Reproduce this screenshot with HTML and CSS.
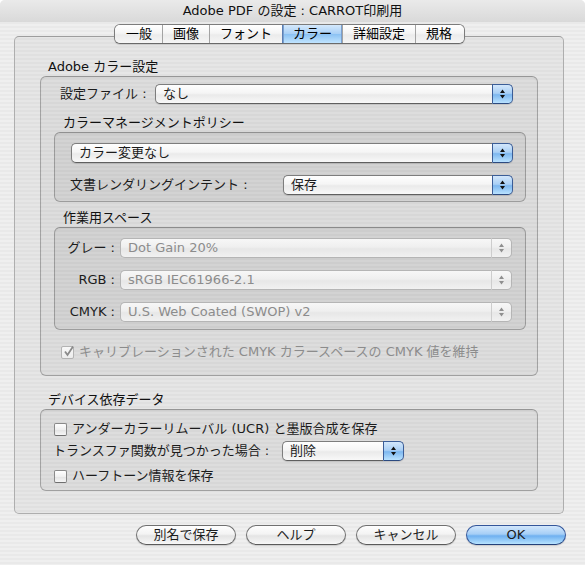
FILE: index.html
```html
<!DOCTYPE html>
<html lang="ja">
<head>
<meta charset="utf-8">
<title>Adobe PDF の設定</title>
<link rel="stylesheet" href="styles.css">
</head>
<body>
<div class="window">
  <div class="titlebar">Adobe PDF の設定 : CARROT印刷用</div>
  <div class="tabview">
    <div class="tabbar">
      <div class="tabs">
        <span class="tab">一般</span>
        <span class="tab">画像</span>
        <span class="tab">フォント</span>
        <span class="tab tab-selected">カラー</span>
        <span class="tab">詳細設定</span>
        <span class="tab tab-last">規格</span>
      </div>
    </div>
    <div class="pane">
      <div class="group-label">Adobe カラー設定</div>
      <div class="box box-adobe">
        <div class="row row-file">
          <span class="label label-file">設定ファイル :</span>
          <div class="popup">
            <span class="popup-value">なし</span>
            <span class="popup-arrows"><svg width="7" height="12" viewBox="0 0 7 12"><path d="M3.5 1.5L6 5H1z M1 7h5l-2.5 3.5z"/></svg></span>
          </div>
        </div>

        <div class="group-label sub-label">カラーマネージメントポリシー</div>
        <div class="box box-inner box-policy">
          <div class="popup">
            <span class="popup-value">カラー変更なし</span>
            <span class="popup-arrows"><svg width="7" height="12" viewBox="0 0 7 12"><path d="M3.5 1.5L6 5H1z M1 7h5l-2.5 3.5z"/></svg></span>
          </div>
          <div class="row row-intent">
            <span class="label label-intent">文書レンダリングインテント :</span>
            <div class="popup">
              <span class="popup-value">保存</span>
              <span class="popup-arrows"><svg width="7" height="12" viewBox="0 0 7 12"><path d="M3.5 1.5L6 5H1z M1 7h5l-2.5 3.5z"/></svg></span>
            </div>
          </div>
        </div>

        <div class="group-label sub-label sub-label-working">作業用スペース</div>
        <div class="box box-inner box-working">
          <div class="row row-space">
            <span class="label label-space">グレー :</span>
            <div class="popup popup-disabled">
              <span class="popup-value">Dot Gain 20%</span>
              <span class="popup-arrows"><svg width="7" height="12" viewBox="0 0 7 12"><path d="M3.5 1.5L6 5H1z M1 7h5l-2.5 3.5z"/></svg></span>
            </div>
          </div>
          <div class="row row-space">
            <span class="label label-space">RGB :</span>
            <div class="popup popup-disabled">
              <span class="popup-value">sRGB IEC61966-2.1</span>
              <span class="popup-arrows"><svg width="7" height="12" viewBox="0 0 7 12"><path d="M3.5 1.5L6 5H1z M1 7h5l-2.5 3.5z"/></svg></span>
            </div>
          </div>
          <div class="row row-space">
            <span class="label label-space">CMYK :</span>
            <div class="popup popup-disabled">
              <span class="popup-value">U.S. Web Coated (SWOP) v2</span>
              <span class="popup-arrows"><svg width="7" height="12" viewBox="0 0 7 12"><path d="M3.5 1.5L6 5H1z M1 7h5l-2.5 3.5z"/></svg></span>
            </div>
          </div>
        </div>

        <div class="check-row check-calib disabled">
          <span class="cb cb-disabled"><svg width="11" height="11" viewBox="0 0 11 11"><path d="M2 5.5L4.5 9L10 0.5" fill="none" stroke="#8a8a8a" stroke-width="1.8"/></svg></span>
          <span class="check-text">キャリブレーションされた CMYK カラースペースの CMYK 値を維持</span>
        </div>
      </div>

      <div class="group-label device-label">デバイス依存データ</div>
      <div class="box box-device">
        <div class="check-row">
          <span class="cb"></span>
          <span class="check-text">アンダーカラーリムーバル (UCR) と墨版合成を保存</span>
        </div>
        <div class="row row-transfer">
          <span class="label label-transfer">トランスファ関数が見つかった場合 :</span>
          <div class="popup popup-small">
            <span class="popup-value">削除</span>
            <span class="popup-arrows"><svg width="7" height="12" viewBox="0 0 7 12"><path d="M3.5 1.5L6 5H1z M1 7h5l-2.5 3.5z"/></svg></span>
          </div>
        </div>
        <div class="check-row check-halftone">
          <span class="cb"></span>
          <span class="check-text">ハーフトーン情報を保存</span>
        </div>
      </div>
    </div>
  </div>
  <div class="buttons">
    <span class="btn">別名で保存</span>
    <span class="btn">ヘルプ</span>
    <span class="btn">キャンセル</span>
    <span class="btn btn-default">OK</span>
  </div>
</div>
</body>
</html>
```

FILE: styles.css
```css
html, body {
  margin: 0;
  padding: 0;
  background: #ffffff;
}

body {
  font-family: "DejaVu Sans", "Noto Sans CJK JP", sans-serif;
  font-size: 13px;
  line-height: 16px;
  color: #1c1c1c;
}

.window {
  width: 585px;
  height: 565px;
  overflow: hidden;
  border-radius: 5px 5px 0 0;
  background: repeating-linear-gradient(to bottom, #efefef 0px, #efefef 2px, #e9e9e9 2px, #e9e9e9 4px);
}

.titlebar {
  height: 22px;
  line-height: 22px;
  text-align: center;
  background: linear-gradient(#eaeaea, #d9d9d9);
  color: #111;
}

.tabview {
  padding: 2px 21px 0 14px;
}

.tabbar {
  display: flex;
  justify-content: center;
  position: relative;
  z-index: 1;
  padding-left: 1px;
}

.tabs {
  display: flex;
  height: 20px;
  box-sizing: border-box;
  border: 1px solid #7c7c7c;
  border-bottom-color: #6a6a6a;
  border-radius: 6px;
  overflow: hidden;
  box-shadow: 0 1px 1px rgba(0, 0, 0, 0.12);
}

.tab {
  padding: 0 10px;
  line-height: 18px;
  border-left: 1px solid #a3a3a3;
  background: linear-gradient(#ffffff, #f5f5f5 45%, #ebebeb 55%, #f6f6f6);
  color: #000;
}

.tab:first-child {
  border-left: none;
  padding-left: 11px;
}

.tab-last {
  padding-right: 12px;
}

.tab-selected {
  border-left-color: #5c7fb3;
  background: linear-gradient(#d5e9fc, #a9d0f6 48%, #8cc2f3 52%, #c0e4ff);
  box-shadow: inset 1px 0 0 #7aa0d0, inset -1px 0 0 #7aa0d0;
}

.pane {
  margin-top: -8px;
  border: 1px solid #aeaeae;
  border-top-color: #9d9d9d;
  border-radius: 5px;
  background: rgba(0, 0, 0, 0.035);
  padding: 22px 25px 22px 25px;
}

.group-label {
  margin-left: 8px;
  margin-bottom: 1px;
  height: 16px;
  color: #111;
}

.sub-label {
  margin-left: 9px;
  margin-top: 11px;
}

.sub-label-working {
  margin-top: 8px;
}

.device-label {
  margin-top: 16px;
}

.box {
  border: 1px solid rgba(0, 0, 0, 0.26);
  border-top-color: rgba(0, 0, 0, 0.32);
  border-radius: 6px;
  background: rgba(0, 0, 0, 0.04);
  box-shadow: inset 0 1px 2px rgba(0, 0, 0, 0.06);
}

.box-adobe {
  padding: 7px 11px 15px 13px;
}

.box-inner {
  background: rgba(0, 0, 0, 0.045);
}

.box-policy {
  padding: 10px 12px 6px 16px;
}

.box-working {
  padding: 10px 13px 7px 0;
}

.box-device {
  padding: 11px 14px 6px 13px;
}

.row {
  display: flex;
  align-items: center;
  height: 20px;
}

.row-file {
  margin: 0 13px 0 6px;
}

.label {
  flex: none;
  white-space: nowrap;
}

.label-file {
  width: 95px;
}

.row-intent {
  margin-top: 12px;
  margin-left: -1px;
}

.label-intent {
  width: 213px;
}

.row-space + .row-space {
  margin-top: 12px;
}

.label-space {
  width: 60px;
  padding-right: 5px;
  text-align: right;
}

.row-transfer {
  margin-top: 4px;
  margin-left: -1px;
}

.label-transfer {
  width: 229px;
}

.popup {
  flex: 1;
  display: flex;
  height: 20px;
  box-shadow: 0 1px 1px rgba(0, 0, 0, 0.12);
  border-radius: 5px;
}

.popup-small {
  flex: none;
  width: 122px;
}

.popup-value {
  flex: 1;
  box-sizing: border-box;
  border: 1px solid #7d7d7d;
  border-bottom-color: #5f5f5f;
  border-right: none;
  border-radius: 5px 0 0 5px;
  background: linear-gradient(#fefefe, #f5f5f5 45%, #eaeaea 55%, #f8f8f8);
  padding-left: 7px;
  line-height: 18px;
  white-space: nowrap;
  overflow: hidden;
}

.popup-arrows {
  flex: none;
  width: 21px;
  box-sizing: border-box;
  border: 1px solid #3b5d97;
  border-bottom-color: #2c4a80;
  border-radius: 0 5px 5px 0;
  background: linear-gradient(#d3e7fb, #a9cff5 46%, #7db7ef 54%, #b9e2ff);
  display: flex;
  align-items: center;
  justify-content: center;
}

.popup-arrows svg {
  fill: #111;
}

.popup-disabled {
  box-shadow: none;
}

.popup-disabled .popup-value {
  color: #8c8c8c;
  border-color: #b5b5b5;
  background: linear-gradient(#f7f7f7, #efefef 45%, #e7e7e7 55%, #f1f1f1);
}

.popup-disabled .popup-arrows {
  border-color: #b5b5b5;
  border-left-color: #cdcdcd;
  background: linear-gradient(#f7f7f7, #efefef 45%, #e7e7e7 55%, #f1f1f1);
}

.popup-disabled .popup-arrows svg {
  fill: #8f8f8f;
}

.check-row {
  display: flex;
  align-items: center;
  height: 16px;
}

.check-calib {
  margin-top: 14px;
  margin-left: 7px;
}

.check-halftone {
  margin-top: 7px;
}

.cb {
  flex: none;
  width: 13px;
  height: 13px;
  box-sizing: border-box;
  border: 1px solid #8a8a8a;
  border-bottom-color: #6f6f6f;
  border-radius: 2px;
  background: linear-gradient(#ffffff, #f0f0f0 50%, #e4e4e4 55%, #f6f6f6);
  margin-right: 5px;
  position: relative;
}

.cb svg {
  position: absolute;
  left: 1px;
  top: -1px;
}

.cb-disabled {
  border-color: #b3b3b3;
  background: linear-gradient(#f8f8f8, #ececec);
}

.disabled .check-text {
  color: #8c8c8c;
}

.check-text {
  white-space: nowrap;
}

.buttons {
  display: flex;
  justify-content: flex-end;
  gap: 10px;
  padding: 11px 19px 0 0;
}

.btn {
  width: 100px;
  height: 20px;
  box-sizing: border-box;
  border: 1px solid #707070;
  border-bottom-color: #5a5a5a;
  border-radius: 10px;
  background: linear-gradient(#fefefe, #f3f3f3 45%, #e4e4e4 55%, #f7f7f7);
  text-align: center;
  line-height: 18px;
  box-shadow: 0 1px 1px rgba(0, 0, 0, 0.15);
}

.btn-default {
  border-color: #34569a;
  border-bottom-color: #24417a;
  background: linear-gradient(#d2e7fc, #a6cef6 45%, #6fb0f0 55%, #b7e3ff);
}
```
